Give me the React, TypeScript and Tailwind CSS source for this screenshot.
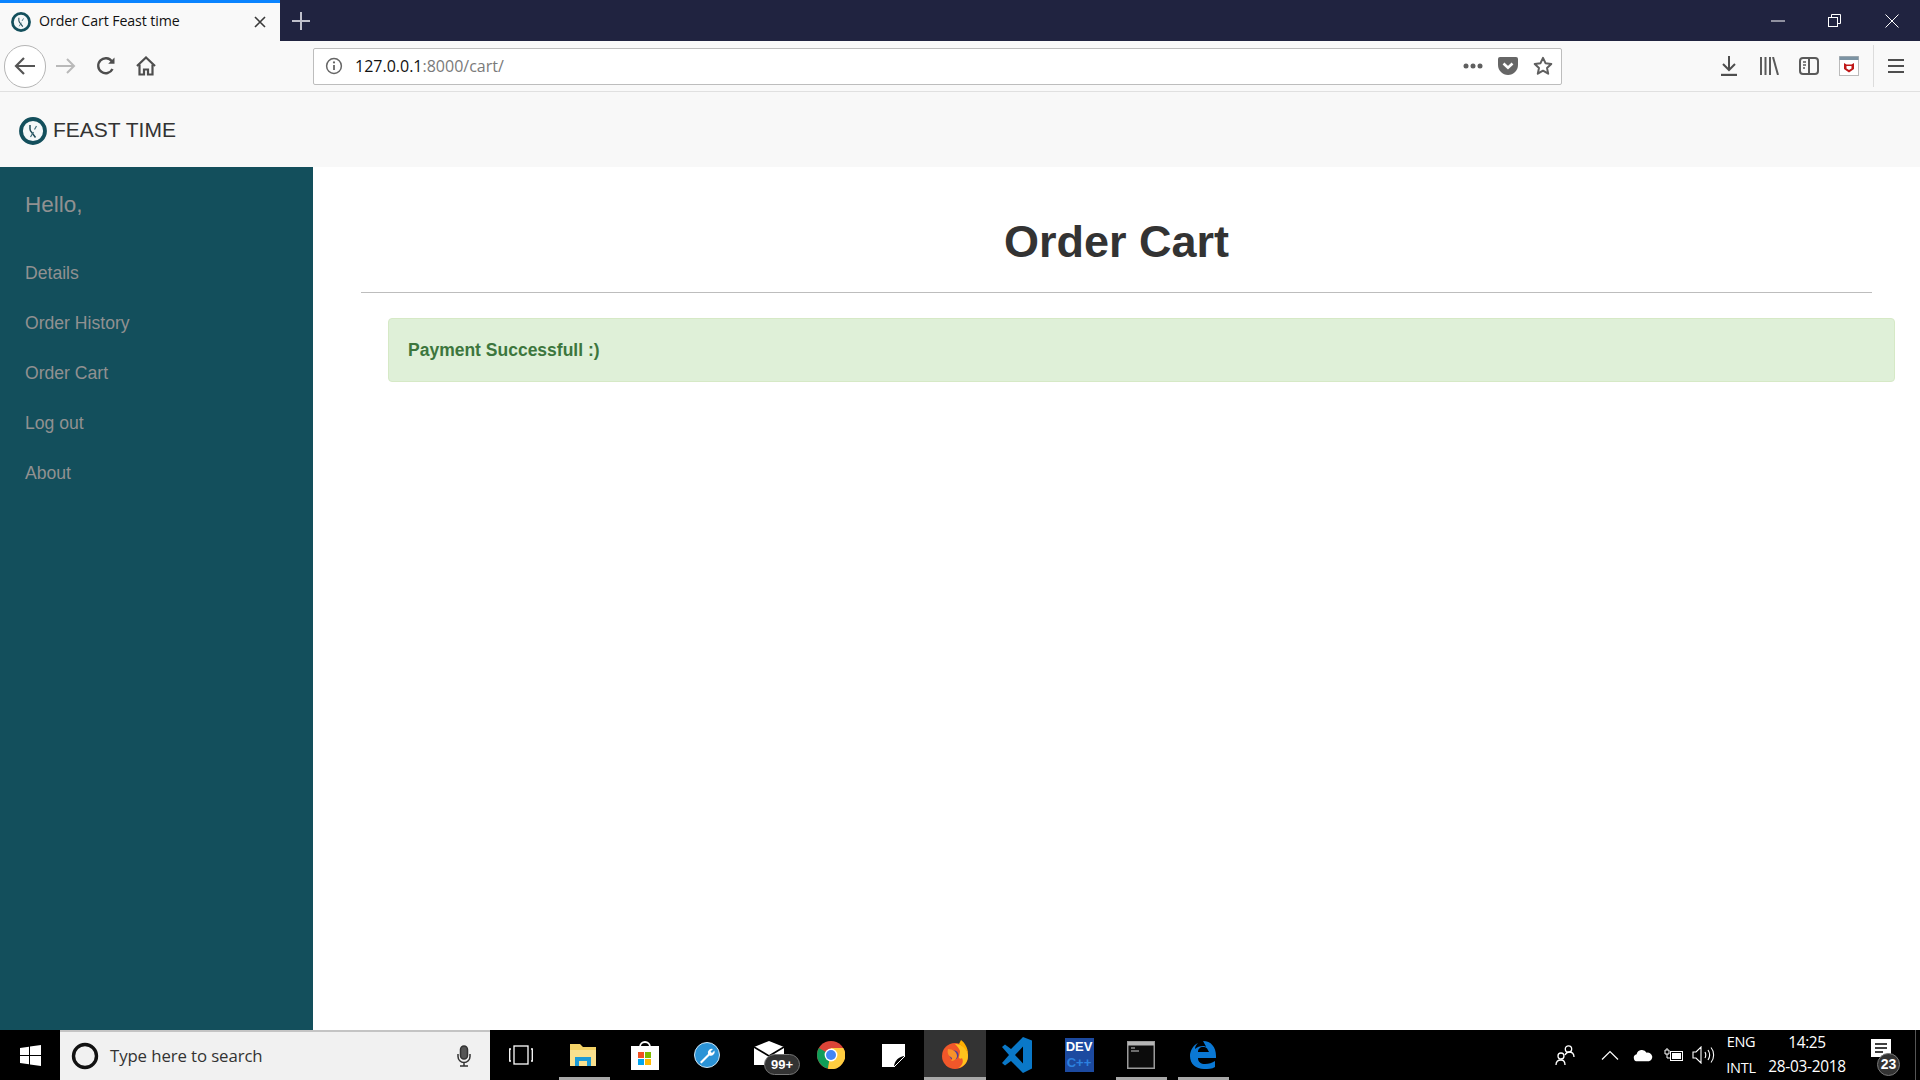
import type { ReactNode } from "react";

const sans = "font-['Liberation_Sans',Arial,sans-serif]";
const ui = "font-['Open_Sans','Noto_Sans',sans-serif]";

const sidebarLinks = ["Details", "Order History", "Order Cart", "Log out", "About"];

function Logo({ size, className = "" }: { size: number; className?: string }) {
  return (
    <svg width={size} height={size} viewBox="0 0 28 28" className={className}>
      <circle cx="14" cy="14" r="12" fill="#f4f8f9" stroke="#134f5c" strokeWidth="3.800" />
      <path d="M11 8v4c0 1.500.8 2.500 1.800 3.500l3.700 5" fill="none" stroke="#1f4a57" strokeWidth="1.500" />
      <path d="M17.500 9l-2 3.500M11.500 20l3-5" fill="none" stroke="#3d6b78" strokeWidth="1.200" />
    </svg>
  );
}

function Slot({ w, children, className = "" }: { w: number; children: ReactNode; className?: string }) {
  return (
    <div className={`flex h-full shrink-0 items-center justify-center ${className}`} style={{ width: w }}>
      {children}
    </div>
  );
}

function TabStrip() {
  return (
    <div className="flex h-[41px] shrink-0 bg-[#202340]">
      <div className="flex w-[280px] items-center border-t-[3px] border-[#0a84ff] bg-[#f9f9f9] pl-[11px]">
        <Logo size={20} />
        <span className={`${ui} ml-[8px] mt-[-2px] text-[14.2px] text-[#111] tracking-[-0.1px]`}>Order Cart Feast time</span>
        <svg width="14" height="14" viewBox="0 0 14 14" className="ml-auto mr-[13px]">
          <path d="M2 2l10 10M12 2L2 12" stroke="#3a3a3a" strokeWidth="1.600" />
        </svg>
      </div>
      <div className="ml-[12px] flex items-center">
        <svg width="18" height="18" viewBox="0 0 18 18">
          <path d="M9 0v18M0 9h18" stroke="#bfc0cb" strokeWidth="2" />
        </svg>
      </div>
      <div className="ml-auto flex h-full items-center">
        <Slot w={57}>
          <svg width="14" height="2" viewBox="0 0 14 2"><path d="M0 1h14" stroke="#fff" strokeWidth="1" /></svg>
        </Slot>
        <Slot w={57}>
          <svg width="13" height="13" viewBox="0 0 13 13" fill="none" stroke="#fff">
            <path d="M3.500 3V.5h9v9H10" />
            <rect x="0.500" y="3.500" width="9" height="9" />
          </svg>
        </Slot>
        <Slot w={57}>
          <svg width="14" height="14" viewBox="0 0 14 14"><path d="M.5.5l13 13M13.500.5l-13 13" stroke="#fff" strokeWidth="1" /></svg>
        </Slot>
      </div>
    </div>
  );
}

function Toolbar() {
  return (
    <div className="flex h-[51px] shrink-0 items-center border-b border-[#e0e0e0] bg-[#f9f9f9] pl-[4px]">
      <div className="flex h-[43px] w-[42px] shrink-0 items-center justify-center rounded-full border border-[#b5b5b5] bg-white">
        <svg width="22" height="20" viewBox="0 0 22 20" fill="none" stroke="#555" strokeWidth="2.200">
          <path d="M21 10H2M10 2l-8 8 8 8" />
        </svg>
      </div>
      <Slot w={40}>
        <svg width="20" height="18" viewBox="0 0 20 18" fill="none" stroke="#b9b9b9" strokeWidth="2">
          <path d="M0 9h18M11 2l7 7-7 7" />
        </svg>
      </Slot>
      <Slot w={40}>
        <svg width="20" height="20" viewBox="0 0 20 20" fill="none" stroke="#4e4e4e" strokeWidth="2.400">
          <path d="M16.500 13a7.500 7.500 0 1 1-.6-7.600" />
          <path d="M18.500 1.500v6.300h-6.300z" fill="#4e4e4e" stroke="none" />
        </svg>
      </Slot>
      <Slot w={40}>
        <svg width="20" height="20" viewBox="0 0 20 20" fill="none" stroke="#4e4e4e" strokeWidth="2.200">
          <path d="M1 10l9-8.500 9 8.500" />
          <path d="M3.500 8.500V18.500H8v-5h4v5h4.500V8.500" />
        </svg>
      </Slot>
      <div className="ml-[147px] flex h-[37px] w-[1249px] shrink-0 items-center rounded-[2px] border border-[#bdbdbd] bg-white">
        <svg width="18" height="18" viewBox="0 0 18 18" fill="none" className="ml-[11px]">
          <circle cx="9" cy="9" r="7.400" stroke="#666" strokeWidth="1.500" />
          <path d="M9 8v5" stroke="#666" strokeWidth="1.800" />
          <circle cx="9" cy="5.400" r="1.100" fill="#666" />
        </svg>
        <span className={`${ui} ml-[12px] text-[16px] text-[#111]`}>
          127.0.0.1<span className="text-[#7a7a7a]">:8000/cart/</span>
        </span>
        <div className="ml-auto mr-px flex h-full items-center">
          <Slot w={35}>
            <svg width="20" height="6" viewBox="0 0 20 6" fill="#5f5f5f">
              <circle cx="3" cy="3" r="2.500" /><circle cx="10" cy="3" r="2.500" /><circle cx="17" cy="3" r="2.500" />
            </svg>
          </Slot>
          <Slot w={35}>
            <svg width="20" height="18" viewBox="0 0 20 18">
              <path d="M2 0h16a2 2 0 0 1 2 2v6c0 5.500-4.500 10-10 10S0 13.500 0 8V2a2 2 0 0 1 2-2z" fill="#666" />
              <path d="M5.500 6.500L10 10.800l4.500-4.300" fill="none" stroke="#fff" strokeWidth="2.600" />
            </svg>
          </Slot>
          <Slot w={35}>
            <svg width="20" height="20" viewBox="0 0 20 20" fill="none" stroke="#5f5f5f" strokeWidth="2" strokeLinejoin="round">
              <path d="M10 1.800l2.500 5.400 5.800.7-4.300 4 1.200 5.800-5.200-3-5.200 3 1.200-5.800-4.300-4 5.800-.7z" />
            </svg>
          </Slot>
        </div>
      </div>
      <div className="ml-[147px] flex h-full items-center">
        <Slot w={40}>
          <svg width="16" height="20" viewBox="0 0 16 20" fill="none" stroke="#4e4e4e" strokeWidth="2">
            <path d="M8 0v13M2 8l6 6 6-6" />
            <path d="M0 19h16" strokeWidth="2.400" />
          </svg>
        </Slot>
        <Slot w={40}>
          <svg width="20" height="18" viewBox="0 0 20 18" fill="none" stroke="#5a5a5a" strokeWidth="2">
            <path d="M2 0v18M6.500 0v18M11 0v18" />
            <path d="M14 0l5 18" />
          </svg>
        </Slot>
        <Slot w={40}>
          <svg width="20" height="18" viewBox="0 0 20 18" fill="none">
            <rect x="1" y="1" width="18" height="16" rx="3" stroke="#5a5a5a" strokeWidth="2" />
            <path d="M10 1v16" stroke="#5a5a5a" strokeWidth="2" />
            <path d="M4 5h3M4 8h3M4 11h2" stroke="#5a5a5a" strokeWidth="1.400" />
          </svg>
        </Slot>
        <Slot w={40}>
          <svg width="20" height="20" viewBox="0 0 20 20">
            <rect x="0.500" y="0.500" width="19" height="19" fill="#fff" stroke="#bbb" />
            <rect x="0.500" y="0.500" width="19" height="3.500" fill="#7c93a3" />
            <path d="M5 7l2.500 1.500h5L15 7v6l-5 3.500L5 13z" fill="#c01818" />
            <path d="M7.500 10h5v2.500L10 14l-2.500-1.500z" fill="#fff" />
          </svg>
        </Slot>
        <div className="ml-[4px] h-[42px] w-px bg-[#dcdcdc]" />
        <Slot w={44}>
          <svg width="16" height="14" viewBox="0 0 16 14" fill="#4e4e4e">
            <rect width="16" height="2" /><rect y="6" width="16" height="2" /><rect y="12" width="16" height="2" />
          </svg>
        </Slot>
      </div>
    </div>
  );
}

function Taskbar() {
  return (
    <div className="flex h-[50px] shrink-0 items-stretch bg-black">
      <Slot w={60}>
        <svg width="21" height="21" viewBox="0 0 21 21" fill="#fff">
          <path d="M0 3l9-1.300V10H0zM10 1.500L21 0v10H10zM0 11h9v8.300L0 18zM10 11h11v10l-11-1.500z" />
        </svg>
      </Slot>
      <div className="flex w-[430px] shrink-0 items-center border-t-2 border-[#c4c4c4] bg-[#f1f1f1] pl-[11px]">
        <svg width="28" height="28" viewBox="0 0 28 28" fill="none">
          <circle cx="14" cy="14" r="11.500" stroke="#111" strokeWidth="3.400" />
        </svg>
        <span className={`${ui} ml-[11px] text-[16.8px] tracking-[-0.1px] text-[#333]`}>Type here to search</span>
        <svg width="14" height="22" viewBox="0 0 14 22" fill="none" stroke="#333" strokeWidth="1.500" className="ml-auto mr-[19px]">
          <rect x="3.500" y="1" width="7" height="13" rx="3.500" fill="#555" />
          <path d="M1 9v2.500a6 6 0 0 0 12 0V9M7 17.500V21M3 21h8" />
        </svg>
      </div>
      <Slot w={62}>
        <svg width="24" height="20" viewBox="0 0 24 20" fill="none" stroke="#fff" strokeWidth="1.300">
          <rect x="5" y="1" width="14" height="18" />
          <path d="M2 4H.7v12H2M22 4h1.300v12H22" />
        </svg>
      </Slot>
      <Slot w={62} className="relative">
        <svg width="28" height="26" viewBox="0 0 28 26">
          <path d="M1 2h10l3 3h13v19H1z" fill="#f3d266" />
          <path d="M1 8h26v16H1z" fill="#f8e08e" />
          <path d="M6 15h16v9h-4v-5h-8v5H6z" fill="#1b9ad6" />
        </svg>
        <div className="absolute bottom-0 left-[7px] h-[3px] w-[51px] bg-[#a8a8a8]" />
      </Slot>
      <Slot w={62}>
        <svg width="28" height="30" viewBox="0 0 28 30">
          <path d="M9 7a5 5 0 0 1 10 0" fill="none" stroke="#fff" strokeWidth="1.800" />
          <rect y="6" width="28" height="24" fill="#fff" />
          <rect x="7" y="12" width="6" height="6" fill="#f25022" />
          <rect x="14" y="12" width="6" height="6" fill="#7fba00" />
          <rect x="7" y="19" width="6" height="6" fill="#00a4ef" />
          <rect x="14" y="19" width="6" height="6" fill="#ffb900" />
        </svg>
      </Slot>
      <Slot w={62}>
        <svg width="26" height="26" viewBox="0 0 26 26">
          <circle cx="13" cy="13" r="12.500" fill="#2b93d6" stroke="#cfe6f5" strokeWidth="1" />
          <path d="M6 20l8-8a4 4 0 0 1 5-5l-2.500 2.500 1.500 1.500 2.500-2.500a4 4 0 0 1-5 5l-8 8z" fill="#fff" />
        </svg>
      </Slot>
      <Slot w={62} className="relative">
        <svg width="30" height="24" viewBox="0 0 30 24" className="mt-[-4px]">
          <path d="M0 6L15 0l15 6v18H0z" fill="#fff" />
          <path d="M0 6l15 9 15-9" fill="none" stroke="#000" strokeWidth="1.600" />
        </svg>
        <div className={`${sans} absolute left-[26px] top-[24px] flex h-[21px] w-[36px] items-center justify-center rounded-full border border-[#777] bg-[#333] text-[13px] font-bold text-white`}>
          99+
        </div>
      </Slot>
      <Slot w={62}>
        <svg width="28" height="28" viewBox="0 0 28 28">
          <circle cx="14" cy="14" r="14" fill="#db4437" />
          <path d="M14 14L1.900 7a14 14 0 0 0 9 20.600z" fill="#0f9d58" />
          <path d="M14 7h12.300A14 14 0 0 1 11 27.700z" fill="#ffcd40" />
          <circle cx="14" cy="14" r="6.400" fill="#fff" />
          <circle cx="14" cy="14" r="5" fill="#4285f4" />
        </svg>
      </Slot>
      <Slot w={62}>
        <svg width="23" height="23" viewBox="0 0 23 23">
          <path d="M0 0h23v23H0z" fill="#fff" />
          <path d="M23 12v11H12c0-6 5-11 11-11z" fill="#000" />
          <path d="M12 23l11-11" stroke="#fff" strokeWidth="1" />
        </svg>
      </Slot>
      <Slot w={62} className="relative bg-[#333]">
        <svg width="28" height="30" viewBox="0 0 28 30">
          <circle cx="14" cy="16" r="13" fill="#f0572a" />
          <path d="M14 4a12 12 0 0 1 13 12c0 6-4 11-10 12 4-2 6-6 4-10-1 1-2 1-3 0 0-3 1-5 1-7-1-3-3-5-5-7z" fill="#ffc21c" />
          <path d="M20 0c4 3 7 8 7 14-2-5-5-8-9-10z" fill="#ffb000" />
          <circle cx="13" cy="15" r="4.500" fill="#4b3f9a" />
          <path d="M7 9c5 0 9 3 9 7 0 3-3 5-6 5 2-2 1-3 0-4-3-1-4-5-3-8z" fill="#f8922a" />
        </svg>
        <div className="absolute bottom-0 left-0 h-[3px] w-full bg-[#a8a8a8]" />
      </Slot>
      <Slot w={62}>
        <svg width="30" height="36" viewBox="0 0 30 36" fill="#0a78c8">
          <path d="M21 0l9 3.500v28L21 36 9 24l-6 4.500L0 26l7-8-7-8 3-2.500L9 12zM21 9.500L13 18l8 8.500z" />
        </svg>
      </Slot>
      <Slot w={62}>
        <div className={`${sans} flex h-[34px] w-[29px] flex-col items-center bg-[#1c4aa0] text-[13px] font-bold leading-[16px]`}>
          <span className="mt-px text-white">DEV</span>
          <span className="text-[#2d82e0]">C++</span>
        </div>
      </Slot>
      <Slot w={62} className="relative">
        <svg width="28" height="28" viewBox="0 0 28 28">
          <rect x="0.750" y="0.750" width="26.500" height="26.500" fill="#0c0c0c" stroke="#9a9a9a" strokeWidth="1.500" />
          <rect x="1" y="1" width="26" height="3.500" fill="#b5b5b5" />
          <path d="M4 7h4M4 10h8" stroke="#ccc" strokeWidth="1" />
        </svg>
        <div className="absolute bottom-0 left-[6px] h-[3px] w-[51px] bg-[#a8a8a8]" />
      </Slot>
      <Slot w={62} className="relative">
        <svg width="26" height="28" viewBox="0 0 26 28">
          <path d="M13 0c8 0 13 6 13 15v2H8c0 4 3 6 7 6 4 0 7-1 10-3v6c-3 2-7 2-11 2C6 28 0 23 0 15 0 10 3 4 8 2 6 4 5 6 5 8c2-2 5-3 8-3 3 0 6 2 6 6 0-3-3-5-6-5-3 0-5 2-5 5h11" fill="#0a78d4" />
        </svg>
        <div className="absolute bottom-0 left-[6px] h-[3px] w-[51px] bg-[#a8a8a8]" />
      </Slot>
      <div className="ml-auto flex items-center">
        <Slot w={40}>
          <svg width="20" height="22" viewBox="0 0 20 22" fill="none" stroke="#fff" strokeWidth="1.300">
            <circle cx="6" cy="12" r="3" />
            <circle cx="13.500" cy="5" r="3.200" />
            <path d="M1 21c0-3 2-5 5-5s4 2 4 5M10 11c1-2 2-3 4-3 3 0 5 2 5 5" />
          </svg>
        </Slot>
        <Slot w={46} className="ml-[2px]">
          <svg width="18" height="10" viewBox="0 0 18 10" fill="none" stroke="#fff" strokeWidth="1.200"><path d="M1 9.500l8-8 8 8" /></svg>
        </Slot>
        <Slot w={20}>
          <svg width="22" height="14" viewBox="0 0 22 14" fill="#fff">
            <path d="M5 14a4 4 0 0 1-1-7.900A6 6 0 0 1 15 4.500 4.700 4.700 0 0 1 17.500 14z" />
          </svg>
        </Slot>
        <Slot w={38} className="ml-[2px]">
          <svg width="20" height="14" viewBox="0 0 20 14" fill="none" stroke="#fff">
            <rect x="6.500" y="3.500" width="12" height="9" />
            <rect x="8" y="5" width="9" height="6" fill="#fff" stroke="none" />
            <path d="M1 2v4h4V2zM3 0v2M3 6v4h3" />
          </svg>
        </Slot>
        <Slot w={24} className="ml-[-1px]">
          <svg width="24" height="18" viewBox="0 0 24 18" fill="none" stroke="#fff" strokeWidth="1.100">
            <path d="M1 6h3l5-5v16l-5-5H1zM13 6c1 2 1 4 0 6M16 4c2 3 2 7 0 10M19 1.500c3.500 4 3.500 11 0 15" />
          </svg>
        </Slot>
        <div className={`${ui} ml-[7px] flex w-[36px] flex-col items-center text-[14.5px] leading-[26px] text-white tracking-[-0.3px]`}>
          <span>ENG</span>
          <span>INTL</span>
        </div>
        <div className={`${ui} ml-[2px] flex w-[92px] flex-col items-center text-[15.4px] leading-[24px] text-white tracking-[-0.3px]`}>
          <span>14:25</span>
          <span>28-03-2018</span>
        </div>
        <Slot w={62} className="relative">
          <svg width="20" height="18" viewBox="0 0 20 18" className="mt-[-14px] ml-[-6px]">
            <path d="M0 0h20v18H0z" fill="#fff" />
            <path d="M4 5h12M4 9h12M4 13h8" stroke="#000" strokeWidth="1.300" />
          </svg>
          <div className={`${sans} absolute left-[24px] top-[23px] flex h-[23px] w-[23px] items-center justify-center rounded-full border border-[#777] bg-[#333] text-[14px] font-bold text-white`}>
            23
          </div>
        </Slot>
        <div className="h-full w-px bg-[#555]" />
        <div className="h-full w-[4px]" />
      </div>
    </div>
  );
}

function Sidebar() {
  return (
    <aside className={`${sans} w-[313px] shrink-0 bg-[#134f5c] pl-[25px] pt-[24px] text-[#919191]`}>
      <p className="text-[22.5px] leading-[28px]">Hello,</p>
      <nav className="mt-[29px] flex flex-col">
        {sidebarLinks.map((link) => (
          <a className="h-[50px] text-[17.6px] leading-[50px]" key={link}>
            {link}
          </a>
        ))}
      </nav>
    </aside>
  );
}

export default function App() {
  return (
    <div className="flex h-screen w-[1920px] flex-col overflow-hidden bg-white">
      <TabStrip />
      <Toolbar />
      <header className={`${sans} flex h-[75px] shrink-0 items-center bg-[#f8f8f8] pl-[19px]`}>
        <Logo size={28} className="mt-[2px]" />
        <span className="ml-[6px] text-[21px] text-[#333]">FEAST TIME</span>
      </header>
      <div className="flex min-h-0 flex-1">
        <Sidebar />
        <main className={`${sans} min-w-0 flex-1 pl-[48px] pr-[48px] pt-[48px]`}>
          <h1 className="text-center text-[45px] font-bold leading-[54px] text-[#333]">Order Cart</h1>
          <hr className="mt-[23px] border-t border-[#bdbdbd]" />
          <div className="ml-[27px] mr-[-23px] mt-[25px] flex h-[64px] items-center rounded-[4px] border border-[#d6e9c6] bg-[#dff0d8] pl-[19px] text-[17.5px] font-bold text-[#3c763d]">
            Payment Successfull :)
          </div>
        </main>
      </div>
      <Taskbar />
    </div>
  );
}
